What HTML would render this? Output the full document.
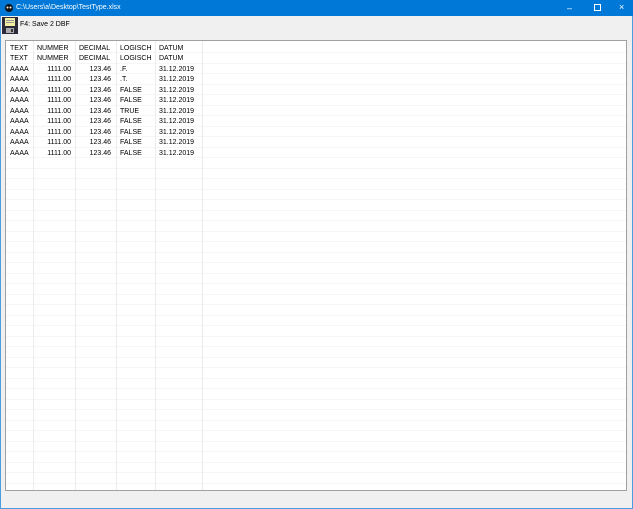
<!DOCTYPE html>
<html><head><style>
body{margin:0;width:633px;height:509px;background:#f0f0f0;position:relative;overflow:hidden;font-family:"Liberation Sans",sans-serif;font-size:7px;color:#000}
.tb{position:absolute;left:0;top:0;width:633px;height:16px;background:#0078d7;color:#fff}
.frame{position:absolute;left:0;top:0;width:631px;height:507px;border:1px solid #4a9de0;}
.grid{position:absolute;left:5px;top:40px;width:620px;height:449px;background:#fff;border:1px solid #a0a0a0;
background-image:repeating-linear-gradient(to bottom,transparent 0,transparent 10px,#ececec 10px,#ececec 10.5px);background-position:0 1.5px}
.v{position:absolute;top:0;bottom:0;width:1px;background:#ececec}
.t{position:absolute;white-space:pre;line-height:10.5px}
</style></head><body>
<div class="frame"></div>
<div class="tb">
<svg style="position:absolute;left:4px;top:3px" width="10" height="10" viewBox="0 0 10 10"><circle cx="5" cy="5" r="4" fill="#111"/><circle cx="3.5" cy="4.5" r="1" fill="#fff"/><circle cx="6.5" cy="4.5" r="1" fill="#fff"/></svg>
<div style="position:absolute;left:16px;top:4px;font-size:7px">C:\Users\a\Desktop\TestType.xlsx</div>
<div style="position:absolute;left:567px;top:3px;font-size:9px">–</div>
<div style="position:absolute;left:594px;top:4px;width:5px;height:5px;border:1px solid #fff"></div>
<div style="position:absolute;left:619px;top:2px;font-size:9px">×</div>
</div>
<svg style="position:absolute;left:2px;top:17px" width="16" height="17" viewBox="0 0 16 17"><rect x="0" y="0" width="16" height="17" fill="#2a2a3a"/><rect x="3" y="1" width="10" height="8" fill="#f4eea0"/><rect x="4" y="3" width="8" height="1" fill="#999"/><rect x="4" y="5" width="8" height="1" fill="#999"/><rect x="4" y="11" width="8" height="5" fill="#aaa"/><rect x="9" y="12" width="2" height="3" fill="#333"/></svg>
<div class="t" style="left:20px;top:20px">F4: Save 2 DBF</div>
<div class="grid">
<div class="v" style="left:27px"></div><div class="v" style="left:69px"></div><div class="v" style="left:110px"></div><div class="v" style="left:149px"></div><div class="v" style="left:196px"></div>
<div class="t" style="left:4px;top:2.5px">TEXT
TEXT
AAAA
AAAA
AAAA
AAAA
AAAA
AAAA
AAAA
AAAA
AAAA</div>
<div class="t" style="left:31px;top:2.5px">NUMMER
NUMMER</div>
<div class="t" style="left:29px;top:23.5px;width:36px;text-align:right">1111.00
1111.00
1111.00
1111.00
1111.00
1111.00
1111.00
1111.00
1111.00</div>
<div class="t" style="left:73px;top:2.5px">DECIMAL
DECIMAL</div>
<div class="t" style="left:70px;top:23.5px;width:35px;text-align:right">123.46
123.46
123.46
123.46
123.46
123.46
123.46
123.46
123.46</div>
<div class="t" style="left:114px;top:2.5px">LOGISCH
LOGISCH
.F.
.T.
FALSE
FALSE
TRUE
FALSE
FALSE
FALSE
FALSE</div>
<div class="t" style="left:153px;top:2.5px">DATUM
DATUM
31.12.2019
31.12.2019
31.12.2019
31.12.2019
31.12.2019
31.12.2019
31.12.2019
31.12.2019
31.12.2019</div>
</div>
</body></html>
